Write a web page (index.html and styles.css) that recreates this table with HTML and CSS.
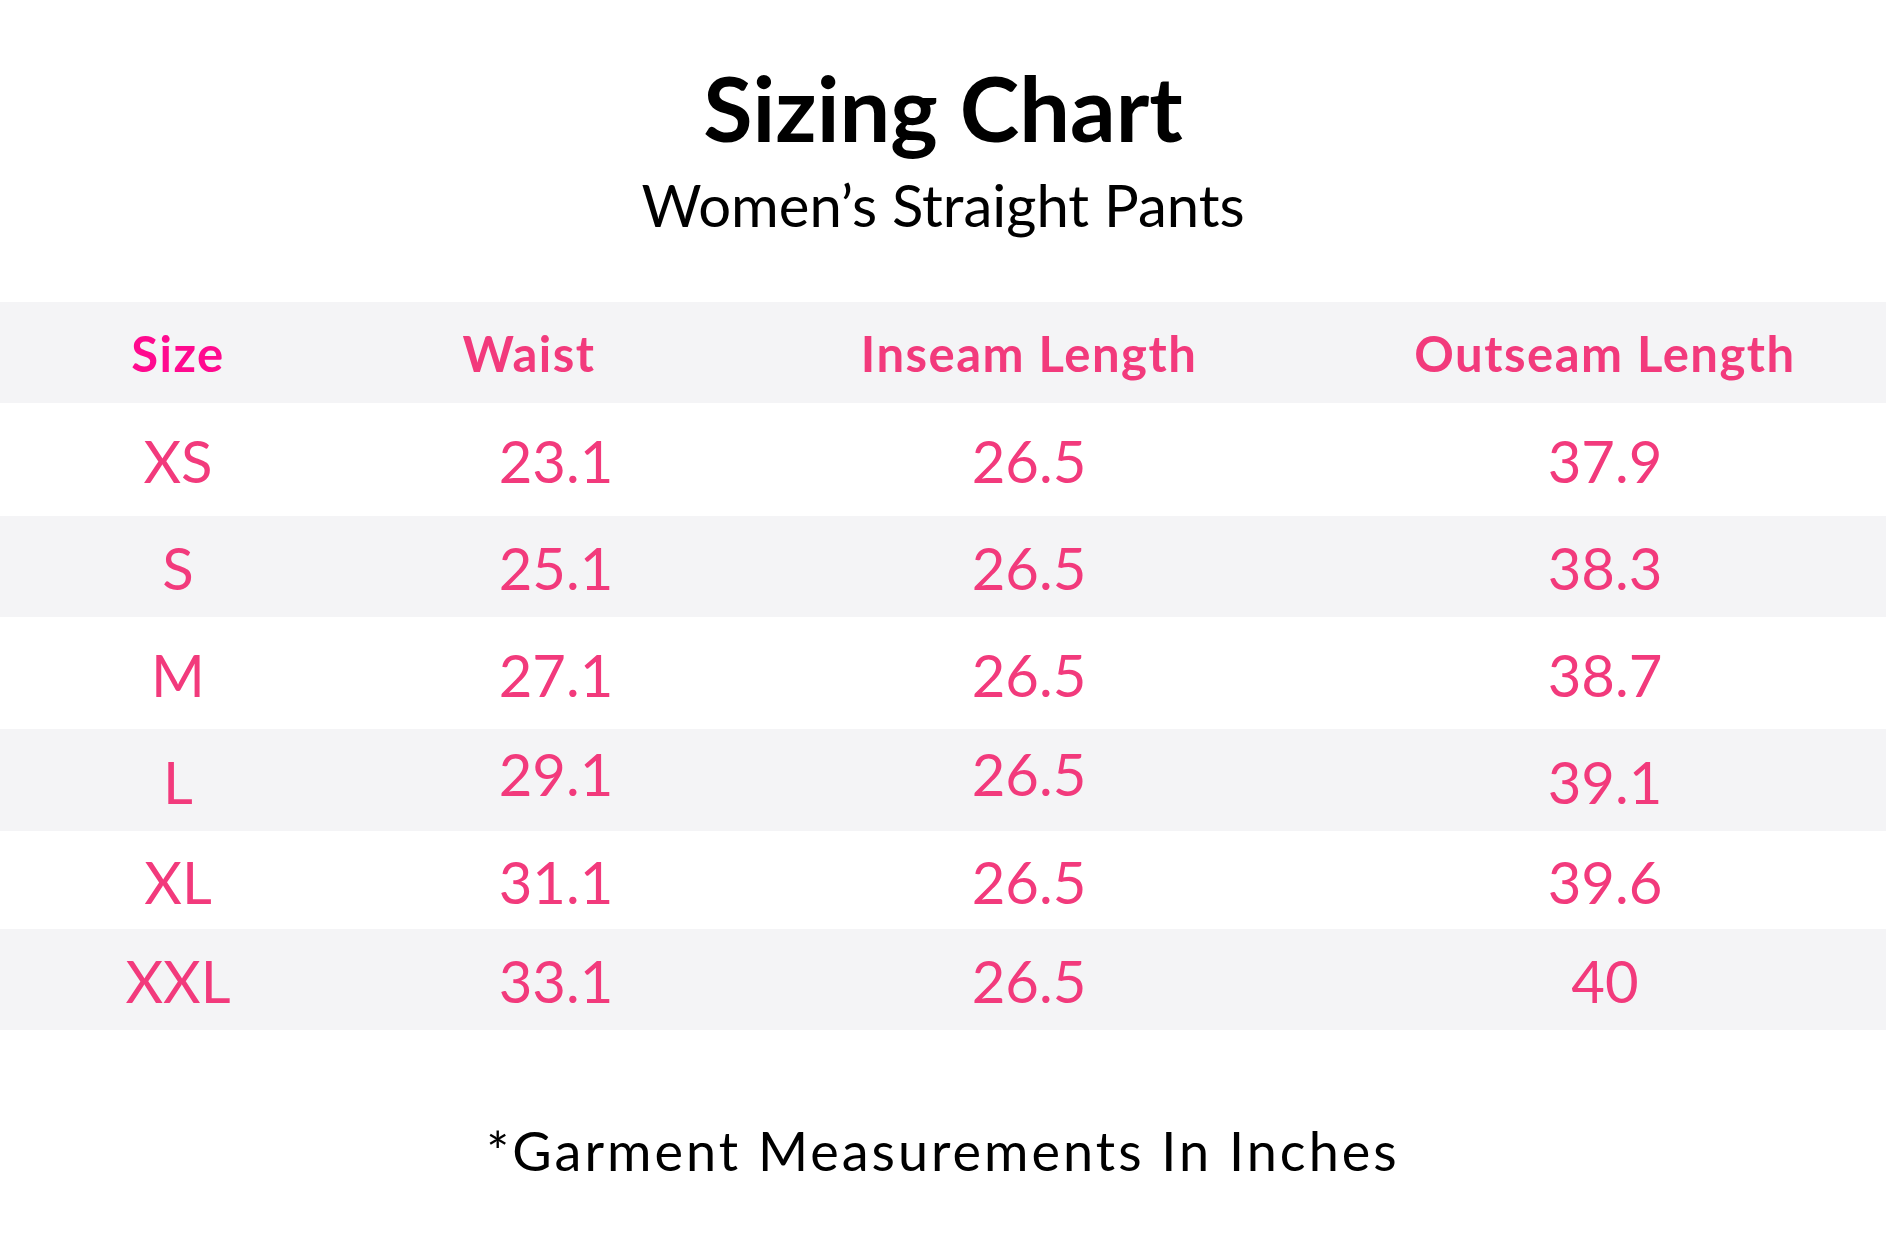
FILE: index.html
```html
<!DOCTYPE html>
<html lang="en">
<head>
<meta charset="utf-8">
<title>Sizing Chart</title>
<link rel="stylesheet" href="styles.css">
</head>
<body>
<main class="chart">
  <header class="chart-head">
    <h1 class="title">Sizing Chart</h1>
    <p class="subtitle">Women’s Straight Pants</p>
  </header>
  <div class="table" role="table">
    <div class="row row-head" role="row">
      <div class="cell cell-size" role="columnheader">Size</div>
      <div class="cell cell-waist" role="columnheader">Waist</div>
      <div class="cell" role="columnheader">Inseam Length</div>
      <div class="cell" role="columnheader">Outseam Length</div>
    </div>
    <div class="row" role="row">
      <div class="cell" role="cell">XS</div>
      <div class="cell cell-waist" role="cell">23.1</div>
      <div class="cell" role="cell">26.5</div>
      <div class="cell" role="cell">37.9</div>
    </div>
    <div class="row" role="row">
      <div class="cell" role="cell">S</div>
      <div class="cell cell-waist" role="cell">25.1</div>
      <div class="cell" role="cell">26.5</div>
      <div class="cell" role="cell">38.3</div>
    </div>
    <div class="row" role="row">
      <div class="cell" role="cell">M</div>
      <div class="cell cell-waist" role="cell">27.1</div>
      <div class="cell" role="cell">26.5</div>
      <div class="cell" role="cell">38.7</div>
    </div>
    <div class="row" role="row">
      <div class="cell" role="cell">L</div>
      <div class="cell cell-waist raised" role="cell">29.1</div>
      <div class="cell raised" role="cell">26.5</div>
      <div class="cell" role="cell">39.1</div>
    </div>
    <div class="row" role="row">
      <div class="cell" role="cell">XL</div>
      <div class="cell cell-waist" role="cell">31.1</div>
      <div class="cell" role="cell">26.5</div>
      <div class="cell" role="cell">39.6</div>
    </div>
    <div class="row" role="row">
      <div class="cell" role="cell">XXL</div>
      <div class="cell cell-waist" role="cell">33.1</div>
      <div class="cell" role="cell">26.5</div>
      <div class="cell" role="cell">40</div>
    </div>
  </div>
  <p class="note">*Garment Measurements In Inches</p>
</main>
</body>
</html>
```

FILE: styles.css
```css
html, body {
  margin: 0;
  padding: 0;
  background: #ffffff;
}

body {
  font-family: Lato, "Noto Sans", "Open Sans", sans-serif;
  color: #000000;
}

.chart {
  width: 1886px;
}

.chart-head {
  padding-top: 53px;
  text-align: center;
}

.title {
  margin: 0;
  font-size: 90px;
  font-weight: 700;
  line-height: 1.2;
}

.subtitle {
  margin: 9px 0 0;
  font-size: 58px;
  font-weight: 400;
  line-height: 1.2;
}

.table {
  margin-top: 62px;
}

.row {
  display: grid;
  grid-template-columns: 356px 378px 590px 1fr;
  align-items: center;
  height: 101px;
}

.row:nth-child(odd) {
  background: #f4f4f6;
}

.row:nth-child(2) { height: 113px; }
.row:nth-child(3) { height: 101px; }
.row:nth-child(4) { height: 112px; }
.row:nth-child(5) { height: 102px; }
.row:nth-child(6) { height: 98px; }
.row:nth-child(7) { height: 101px; }

.cell {
  text-align: center;
  font-size: 58px;
  font-weight: 400;
  line-height: 1.2;
  color: #f23a7c;
  padding-top: 4px;
}

.cell-waist {
  padding-left: 22px;
}

.raised {
  padding-top: 0;
  margin-bottom: 12px;
}

.row-head .cell {
  font-size: 49px;
  font-weight: 700;
  letter-spacing: 1.5px;
  padding-top: 3px;
}

.row-head .cell-waist {
  padding-left: 0;
  padding-right: 32px;
}

.row-head .cell-size {
  color: #ff0a8f;
}

.note {
  margin: 89px 0 0;
  text-align: center;
  font-size: 54px;
  font-weight: 400;
  letter-spacing: 3px;
  line-height: 1.2;
}
```
